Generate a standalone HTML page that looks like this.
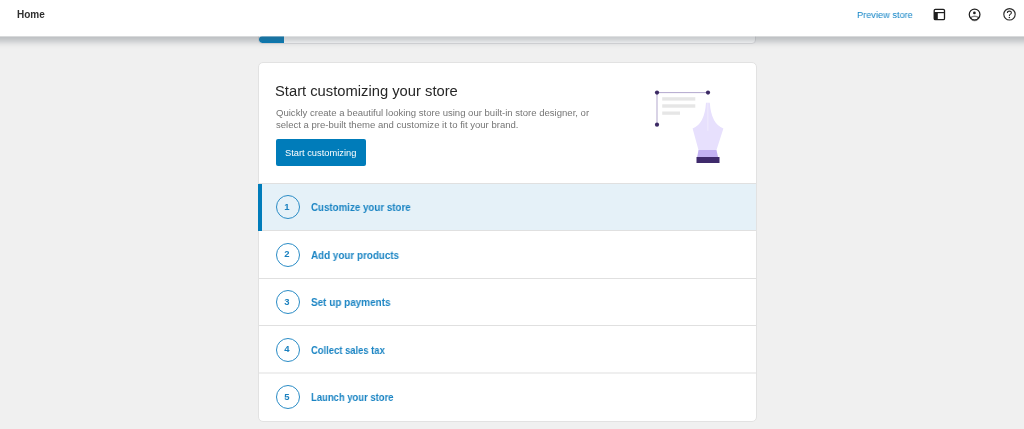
<!DOCTYPE html>
<html><head><meta charset="utf-8">
<style>
html,body{margin:0;padding:0;}
body{width:1024px;height:429px;overflow:hidden;background:#f0f0f0;position:relative;font-family:"Liberation Sans",sans-serif;}
.abs{position:absolute;white-space:nowrap;}
#hdr{position:absolute;left:0;top:0;width:1024px;height:36px;background:#fff;z-index:10;}
#shd{position:absolute;left:-40px;top:0;width:1104px;height:36px;background:#fff;z-index:9;box-shadow:0 6px 6px rgba(85,93,102,.33);}
#shl{position:absolute;left:0;top:36px;width:1024px;height:1px;background:rgba(255,255,255,.4);z-index:11;}
#stub{position:absolute;left:258px;top:-20px;width:496px;height:62px;background:#fff;border:1px solid #dcdcde;border-radius:4px;overflow:hidden;box-sizing:content-box;}
#stubbar{position:absolute;left:0;top:55px;width:25px;height:7px;background:#007cba;border-radius:3.5px 0 0 3.5px;}
#card{position:absolute;left:258px;top:62px;width:497px;height:358px;background:#fff;border:1px solid #e2e2e2;border-radius:5px;overflow:hidden;}
.t{position:absolute;white-space:nowrap;will-change:transform;}
.sep{position:absolute;left:0;width:100%;height:1px;background:#e0e0e0;}
.circ{position:absolute;width:22px;height:22px;border:1px solid #2a8cc6;border-radius:50%;}
.num{position:absolute;will-change:transform;font-weight:700;color:#1a80bf;font-size:9.5px;line-height:12px;text-align:center;width:24px;}
.lbl{position:absolute;will-change:transform;font-weight:700;color:#1a84c3;font-size:10.5px;line-height:14px;white-space:nowrap;transform-origin:0 0;}
</style></head>
<body>
<div id="shd"></div><div id="shl"></div>
<div id="hdr">
  <div class="t" style="left:16.6px;top:9.3px;font-size:10px;line-height:12px;font-weight:700;color:#2f2f2f;">Home</div>
  <div class="t" style="left:856.6px;top:9.2px;font-size:9.7px;line-height:12px;color:#1284c6;transform:scaleX(0.95);transform-origin:0 0;">Preview store</div>
  <svg class="abs" style="left:926px;top:2px" width="26" height="26" viewBox="0 0 26 26">
    <rect x="8.2" y="7.4" width="10.3" height="10.2" rx="1.2" fill="none" stroke="#1e1e1e" stroke-width="1.3"/>
    <line x1="8" y1="10.6" x2="18.6" y2="10.6" stroke="#1e1e1e" stroke-width="1.2"/>
    <rect x="8" y="10.6" width="3.8" height="7.2" fill="#1e1e1e"/>
  </svg>
  <svg class="abs" style="left:962px;top:2px" width="26" height="26" viewBox="0 0 26 26">
    <circle cx="12.6" cy="12.45" r="5.35" fill="none" stroke="#1e1e1e" stroke-width="1.25"/>
    <circle cx="12.4" cy="10.9" r="1.35" fill="#1e1e1e"/>
    <path d="M7.6 15.6 Q12.6 11.4 17.6 15.6 L17.2 16.6 A5.3 5.3 0 0 1 8 16.6 Z" fill="#1e1e1e" fill-opacity="0.55"/>
    <ellipse cx="12.6" cy="16.1" rx="2.9" ry="1.2" fill="#fff"/>
  </svg>
  <svg class="abs" style="left:994px;top:2px" width="30" height="26" viewBox="0 0 30 26">
    <circle cx="15.5" cy="12.3" r="5.7" fill="none" stroke="#2a2a2a" stroke-width="1.15"/>
    <path d="M13.4 11 Q13.4 9.1 15.4 9.1 Q17.4 9.1 17.4 10.8 Q17.4 12 15.9 12.6 Q15.4 12.9 15.4 13.9" fill="none" stroke="#2a2a2a" stroke-width="1.1"/>
    <circle cx="15.4" cy="15.5" r="0.75" fill="#2a2a2a"/>
  </svg>
</div>

<div id="stub"><div id="stubbar"></div></div>

<div id="card">
  <div class="t" style="left:16px;top:18.2px;font-size:14.75px;line-height:20px;color:#262626;">Start customizing your store</div>
  <div class="t" style="left:17px;top:43.8px;font-size:9.56px;line-height:11.5px;color:#757575;">Quickly create a beautiful looking store using our built-in store designer, or<br>select a pre-built theme and customize it to fit your brand.</div>
  <div class="t" style="left:17px;top:76px;width:89.5px;height:26.7px;background:#007cba;border-radius:2px;"></div>
  <div class="t" style="left:25.5px;top:83.5px;font-size:9.3px;line-height:12px;color:#fff;">Start customizing</div>

  <svg class="abs" style="left:380px;top:20px" width="100" height="90" viewBox="0 0 100 90">
    <g transform="translate(-639,-83)">
      <line x1="657" y1="92.6" x2="708" y2="92.6" stroke="#a598c4" stroke-width="0.85"/>
      <line x1="657" y1="92.6" x2="657" y2="124.7" stroke="#a598c4" stroke-width="0.85"/>
      <rect x="662.2" y="97.2" width="33.1" height="3.4" fill="#e6e6e6"/>
      <rect x="662.2" y="104.3" width="33.1" height="3.4" fill="#e6e6e6"/>
      <rect x="662.2" y="111.5" width="17.8" height="3.3" fill="#e6e6e6"/>
      <path d="M706 102.8 L709.8 102.8 Q711.2 124 723.4 128.5 L716.5 150 L698.5 150 L692.6 128.5 Q704.6 124 706 102.8 Z" fill="#e7e0fd"/>
      <line x1="707.9" y1="103" x2="707.9" y2="130.8" stroke="#f3effd" stroke-width="0.8"/>
      <path d="M698.5 150 L716.5 150 L718 157 L697.2 157 Z" fill="#c2b1f2"/>
      <rect x="696.5" y="157" width="23" height="6" fill="#3f2a6c"/>
      <circle cx="657" cy="92.6" r="2.1" fill="#3c2a64"/>
      <circle cx="708" cy="92.6" r="2.1" fill="#3c2a64"/>
      <circle cx="657" cy="124.7" r="2.1" fill="#3c2a64"/>
    </g>
  </svg>

  <div class="sep" style="top:120px"></div>
  <div style="position:absolute;left:0;top:121px;width:100%;height:46px;background:#e5f1f8;"></div>
  <div class="circ" style="left:16.6px;top:132.10px"></div>
  <div class="num" style="left:16.3px;top:137.90px">1</div>
  <div class="lbl" style="left:51.8px;top:137.40px;transform:scaleX(0.928)">Customize your store</div>
  <div class="sep" style="top:167px"></div>
  <div class="circ" style="left:16.6px;top:179.60px"></div>
  <div class="num" style="left:16.3px;top:185.40px">2</div>
  <div class="lbl" style="left:51.8px;top:184.90px;transform:scaleX(0.938)">Add your products</div>
  <div class="sep" style="top:215.00px"></div>
  <div class="circ" style="left:16.6px;top:227.10px"></div>
  <div class="num" style="left:16.3px;top:232.90px">3</div>
  <div class="lbl" style="left:51.8px;top:232.40px;transform:scaleX(0.946)">Set up payments</div>
  <div class="sep" style="top:262px"></div>
  <div class="circ" style="left:16.6px;top:274.60px"></div>
  <div class="num" style="left:16.3px;top:280.40px">4</div>
  <div class="lbl" style="left:51.8px;top:279.90px;transform:scaleX(0.897)">Collect sales tax</div>
  <div class="sep" style="top:309px;height:2px;background:#efefef"></div>
  <div class="circ" style="left:16.6px;top:322.10px"></div>
  <div class="num" style="left:16.3px;top:327.90px">5</div>
  <div class="lbl" style="left:51.8px;top:327.40px;transform:scaleX(0.9)">Launch your store</div>
</div>
<div style="position:absolute;left:258px;top:184px;width:4px;height:47px;background:#007cba;"></div>

</body></html>
